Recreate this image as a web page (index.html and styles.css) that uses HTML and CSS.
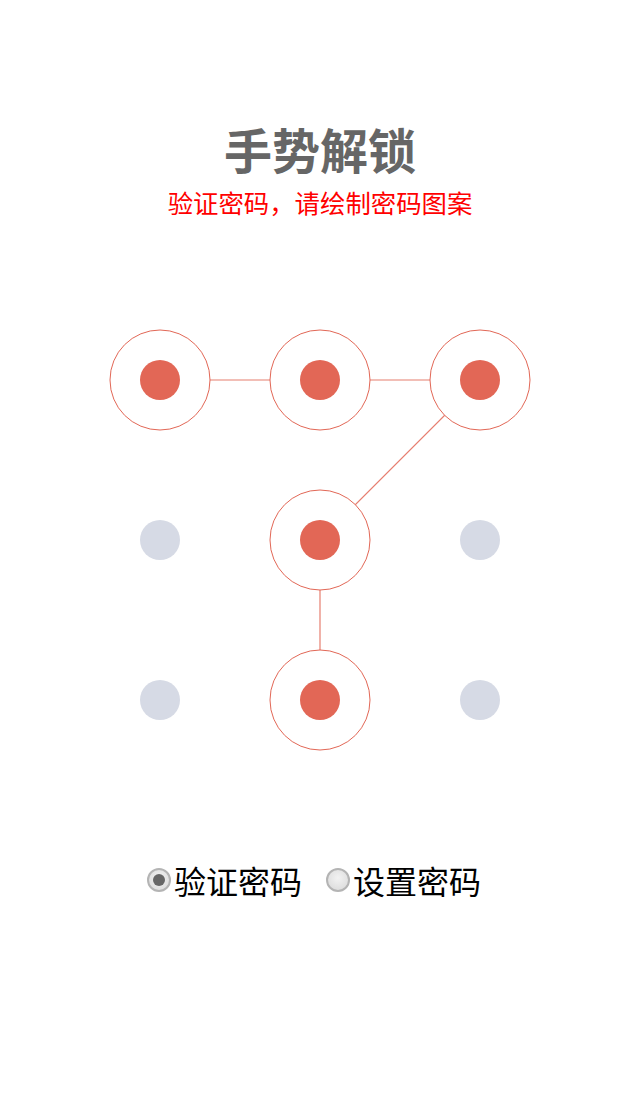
FILE: index.html
```html
<!DOCTYPE html>
<html lang="zh">
<head>
<meta charset="utf-8">
<title>手势解锁</title>
<link rel="stylesheet" href="styles.css">
</head>
<body>
<div class="page">
  <h1 class="title">手势解锁</h1>
  <p class="subtitle">验证密码，请绘制密码图案</p>
  <svg class="pad" width="640" height="480" viewBox="0 0 640 480">
    <g class="link">
      <line x1="160" y1="80" x2="320" y2="80"/>
      <line x1="320" y1="80" x2="480" y2="80"/>
      <line x1="480" y1="80" x2="320" y2="240"/>
      <line x1="320" y1="240" x2="320" y2="400"/>
    </g>
    <g class="ring">
      <circle cx="160" cy="80" r="50"/>
      <circle cx="320" cy="80" r="50"/>
      <circle cx="480" cy="80" r="50"/>
      <circle cx="320" cy="240" r="50"/>
      <circle cx="320" cy="400" r="50"/>
    </g>
    <g class="dot-on">
      <circle cx="160" cy="80" r="20"/>
      <circle cx="320" cy="80" r="20"/>
      <circle cx="480" cy="80" r="20"/>
      <circle cx="320" cy="240" r="20"/>
      <circle cx="320" cy="400" r="20"/>
    </g>
    <g class="dot-off">
      <circle cx="160" cy="240" r="20"/>
      <circle cx="480" cy="240" r="20"/>
      <circle cx="160" cy="400" r="20"/>
      <circle cx="480" cy="400" r="20"/>
    </g>
  </svg>
  <div class="modes">
    <label class="mode"><span class="radio checked"></span><span class="mode-text">验证密码</span></label>
    <label class="mode"><span class="radio"></span><span class="mode-text">设置密码</span></label>
  </div>
</div>
</body>
</html>
```
FILE: styles.css
```css
html, body {
  margin: 0;
  padding: 0;
  background: #ffffff;
}
body {
  font-family: "Noto Sans CJK SC", "Noto Sans", sans-serif;
}
.page {
  width: 640px;
  height: 1120px;
  display: flex;
  flex-direction: column;
  align-items: center;
}
.title {
  margin: 124px 0 0;
  font-size: 48px;
  line-height: 48px;
  font-weight: 700;
  color: #666666;
}
.subtitle {
  margin: 17px 0 0;
  font-size: 25.4px;
  line-height: 26px;
  color: #ff0000;
}
.pad {
  display: block;
  margin-top: 85px;
}
.link line {
  stroke: #e26756;
  stroke-width: 1.2;
  stroke-opacity: 0.85;
}
.ring circle {
  fill: #ffffff;
  stroke: #e26756;
  stroke-width: 1;
}
.dot-on circle {
  fill: #e26756;
}
.dot-off circle {
  fill: #d6dae5;
}
.modes {
  align-self: stretch;
  display: flex;
  align-items: center;
  gap: 24px;
  padding-left: 147px;
  margin-top: 84px;
}
.mode {
  display: flex;
  align-items: center;
  gap: 3px;
}
.radio {
  box-sizing: border-box;
  width: 24px;
  height: 24px;
  border-radius: 50%;
  border: 2px solid #b4b4b4;
  background: radial-gradient(circle at 50% 40%, #f2f2f2 0%, #d8d8d8 100%);
  display: flex;
  align-items: center;
  justify-content: center;
}
.radio.checked::after {
  content: "";
  width: 12px;
  height: 12px;
  border-radius: 50%;
  background: #666666;
}
.mode-text {
  font-size: 32px;
  line-height: 32px;
  color: #000000;
}
```
